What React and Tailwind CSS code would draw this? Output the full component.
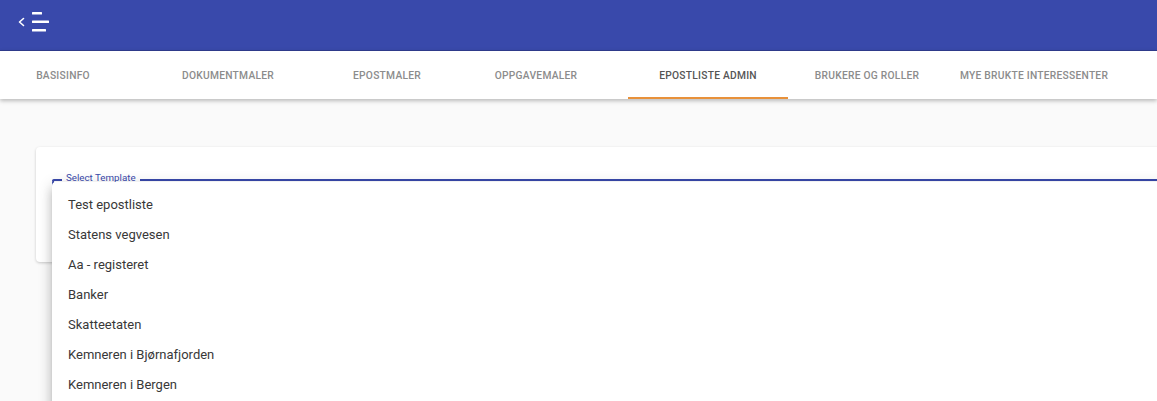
import React from "react";

const tabs = [
  { label: "BASISINFO", w: "w-[126px]" },
  { label: "DOKUMENTMALER", w: "w-[204px]" },
  { label: "EPOSTMALER", w: "w-[114px]" },
  { label: "OPPGAVEMALER", w: "w-[184px]" },
  { label: "EPOSTLISTE ADMIN", w: "w-[160px]", active: true },
  { label: "BRUKERE OG ROLLER", w: "w-[158px]" },
  { label: "MYE BRUKTE INTERESSENTER", w: "w-[176px]" },
];

const items = [
  "Test epostliste",
  "Statens vegvesen",
  "Aa - registeret",
  "Banker",
  "Skatteetaten",
  "Kemneren i Bjørnafjorden",
  "Kemneren i Bergen",
];

export default function App() {
  return (
    <div
      className="relative w-[1157px] h-[401px] overflow-hidden bg-[#fafafa]"
      style={{ fontFamily: "Roboto, 'Liberation Sans', sans-serif" }}
    >
      <header className="h-[50px] bg-[#3949ab] flex items-center">
        <svg width="60" height="50" viewBox="0 0 60 50" className="shrink-0">
          <path d="M23.5 18.5 L19.5 22 L23.5 25.5" fill="none" stroke="#fff" strokeWidth="1.6" strokeLinecap="round" strokeLinejoin="round" />
          <rect x="32" y="12" width="10" height="2.4" fill="#fff" rx="0.5" />
          <rect x="32" y="20.5" width="17" height="2.4" fill="#fff" rx="0.5" />
          <rect x="32" y="29" width="14" height="2.4" fill="#fff" rx="0.5" />
        </svg>
      </header>
      <nav className="relative z-10 h-[49px] bg-white flex shadow-[0_2px_4px_rgba(0,0,0,0.25)] border-t border-[#2e3a8a]">
        {tabs.map((t) => (
          <div
            key={t.label}
            className={`${t.w} shrink-0 relative flex items-center justify-center text-[10.25px] font-medium tracking-[0.25px] ${
              t.active ? "text-[#555555]" : "text-[#8c8c8c]"
            }`}
          >
            <span className="mt-[1px]">{t.label}</span>
            {t.active && (
              <span className="absolute left-0 right-0 bottom-0 h-[2px] bg-[#e8913a]" />
            )}
          </div>
        ))}
      </nav>
      <main className="pt-[48px] pl-[36px]">
        <div className="w-[1160px] h-[115px] bg-white rounded-[4px] shadow-[0_1px_3px_rgba(0,0,0,0.2)] pt-[32px] pl-[16px]">
          <div className="relative h-[42px] border-2 border-[#3949ab] rounded-tl-[4px] border-t-0">
            <div className="absolute -left-[2px] right-0 top-0 h-[2px] flex items-center">
              <span className="w-[10px] h-[2px] bg-[#3949ab] rounded-tl-[4px]" />
              <span className="relative -top-[2px] px-[4px] text-[9.75px] leading-none text-[#3949ab] whitespace-nowrap">Select Template</span>
              <span className="flex-1 h-[2px] bg-[#3949ab]" />
            </div>
          </div>
        </div>
      </main>
      <div className="absolute left-[52px] top-[182px] w-[1200px] h-[300px] bg-white rounded-[4px] shadow-[0_5px_5px_-3px_rgba(0,0,0,0.2),0_8px_10px_1px_rgba(0,0,0,0.14),0_3px_14px_2px_rgba(0,0,0,0.12)] py-[8px]">
        {items.map((it) => (
          <div key={it} className="h-[30px] px-[16px] flex items-center text-[13px] text-[#383838]">
            {it}
          </div>
        ))}
      </div>
    </div>
  );
}
